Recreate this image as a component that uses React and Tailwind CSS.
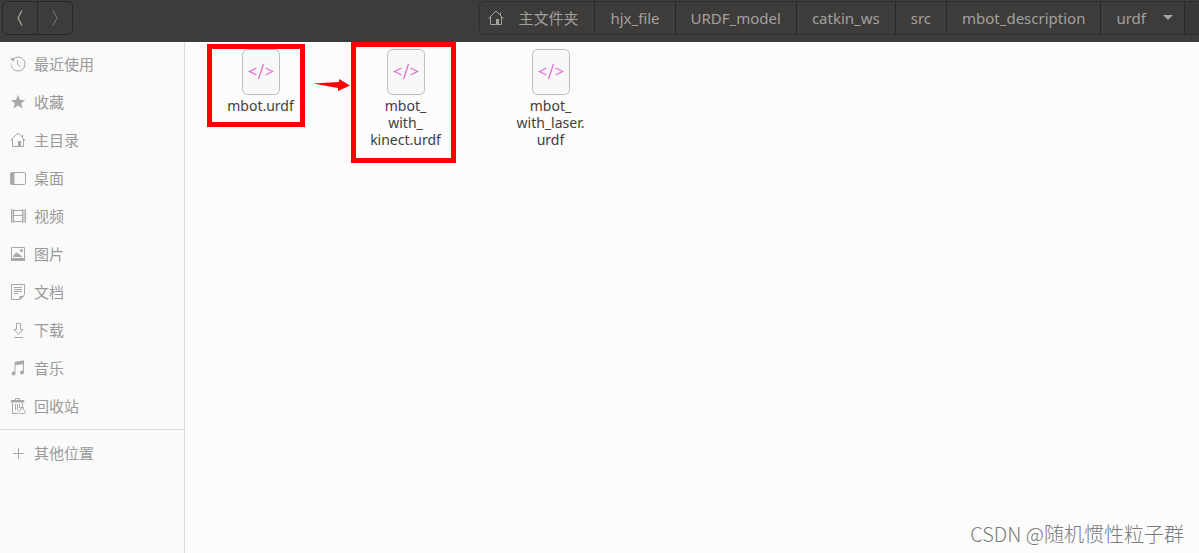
import React from 'react';

const RecentIcon = () => (
    <svg width="16" height="16" viewBox="0 0 16 16" fill="none" stroke="currentColor">
        <path d="M3 3.200A7 7 0 1 1 1.200 9.500" />
        <path d="M1 7.500v1M7.500 4v4.500l2.500 2" />
        <path d="M0 2.500l4.500-.5L3.800 6z" fill="currentColor" stroke="none" />
    </svg>
);

const StarIcon = () => (
    <svg width="16" height="16" viewBox="0 0 16 16" fill="currentColor">
        <path d="M8 .8l2 5.100 5.200.2-4.100 3.300 1.500 5.200L8 11.600l-4.600 3 1.500-5.200L.8 6.100 6 5.900z" />
    </svg>
);

const HomeIcon = () => (
    <svg width="16" height="16" viewBox="0 0 16 16" fill="none" stroke="currentColor">
        <path d="M.5 8.500L8 1l7.500 7.500M2.500 7v7.500h11V7M12.500 5V2.500" />
        <path d="M8 9h3v5.500H8z" fill="currentColor" stroke="none" />
    </svg>
);

const DesktopIcon = () => (
    <svg width="16" height="16" viewBox="0 0 16 16" fill="none" stroke="currentColor">
        <rect x=".5" y="2.500" width="15" height="12" rx="1.500" />
        <path d="M1 2.500h3.500v12H1z" fill="currentColor" stroke="none" />
    </svg>
);

const VideoIcon = () => (
    <svg width="16" height="16" viewBox="0 0 16 16" fill="none" stroke="currentColor">
        <path d="M3.500 1.500v13M12.500 1.500v13M3 2.500h10M3 7.500h10M3 13.500h10" />
        <path d="M2 1.500v13M14 1.500v13" strokeWidth="2" strokeDasharray="1 1" />
        <path d="M1.500 1.500v13M15.500 1.500v13" />
    </svg>
);

const PictureIcon = () => (
    <svg width="16" height="16" viewBox="0 0 16 16" fill="none" stroke="currentColor">
        <path d="M1.500 1.500h13v13h-13z" />
        <path d="M1 12h14v3H1zM3 11V9.500L5 8l1-2 2 2 1-.5 1.500 2L12 10v1z" fill="currentColor" stroke="none" />
        <circle cx="11.500" cy="4.500" r="1.500" fill="currentColor" stroke="none" />
    </svg>
);

const DocumentIcon = () => (
    <svg width="16" height="16" viewBox="0 0 16 16" fill="none" stroke="currentColor">
        <path d="M1.500.5h13v10l-4 5h-9zM4 3.500h8M4 5.500h8M4 7.500h8M4 9.500h4" />
        <path d="M9.500 15.500V12h5z" fill="currentColor" stroke="none" />
    </svg>
);

const DownloadIcon = () => (
    <svg width="16" height="16" viewBox="0 0 16 16" fill="none" stroke="currentColor">
        <path d="M6.500 1.500h4v6h2.500L8.500 12.500 4 7.500h2.500zM4 15.500h9" />
    </svg>
);

const MusicIcon = () => (
    <svg width="16" height="16" viewBox="0 0 16 16" fill="none" stroke="currentColor">
        <path d="M5 13V2.500L13.500 1v11" />
        <path d="M5 2l9-1.500V4L5 5.200z" fill="currentColor" stroke="none" />
        <circle cx="3.500" cy="13.500" r="2" fill="currentColor" stroke="none" />
        <circle cx="12" cy="12.500" r="2" fill="currentColor" stroke="none" />
    </svg>
);

const TrashIcon = () => (
    <svg width="16" height="16" viewBox="0 0 16 16" fill="none" stroke="currentColor">
        <path d="M5.500 2V.5h4V2M2.500 5v10.500H8M12.500 5v4M5.500 6v6M7.500 6v6M9.500 6v4" />
        <path d="M1 2h13l.5 2.500H.5z" fill="currentColor" stroke="none" />
        <path d="M10.500 9.500h3l-.8 1.700c1.400.6 2.400 1.500 2.400 2.600 0 1.200-.8 1.700-1.800 1.700h-2.600c-1 0-1.800-.5-1.800-1.700 0-1.100 1-2 2.400-2.600z" />
    </svg>
);

const PlusIcon = () => (
    <svg width="16" height="16" viewBox="0 0 16 16" fill="none" stroke="currentColor">
        <path d="M8.500 3v11M3 8.500h11" />
    </svg>
);

const places = [
    { label: '最近使用', Icon: RecentIcon },
    { label: '收藏', Icon: StarIcon },
    { label: '主目录', Icon: HomeIcon },
    { label: '桌面', Icon: DesktopIcon },
    { label: '视频', Icon: VideoIcon },
    { label: '图片', Icon: PictureIcon },
    { label: '文档', Icon: DocumentIcon },
    { label: '下载', Icon: DownloadIcon },
    { label: '音乐', Icon: MusicIcon },
    { label: '回收站', Icon: TrashIcon }
];

const crumbs = ['hjx_file', 'URDF_model', 'catkin_ws', 'src', 'mbot_description'];

const files = [
    { lines: ['mbot.urdf'], mark: 'left-[19px] top-[2px] w-[98px] h-[83px]' },
    { lines: ['mbot_', 'with_', 'kinect.urdf'], mark: 'left-[18px] top-0 w-[105px] h-[121px]' },
    { lines: ['mbot_', 'with_laser.', 'urdf'] }
];

function PlaceButton({ label, Icon }) {
    return (
        <button className="flex h-[38px] w-full items-center gap-2 pl-[10px] text-[15px] text-[#999999]">
            <span className="text-[#a8a8a8]"><Icon /></span>
            {label}
        </button>
    );
}

function FileItem({ lines, mark }) {
    return (
        <li className="relative w-[145px] pt-[7px]">
            <button className="flex w-full flex-col items-center text-[14px] leading-[17px] text-[#404040]">
                <svg className="mb-px" width="38" height="47" viewBox="0 0 38 47" fill="none">
                    <rect x=".5" y=".5" width="37" height="45" rx="5" fill="#f8f8f8" stroke="#bdbdbd" />
                    <path d="M14.500 19L7.500 22.500l7 3.500M23.500 19l7 3.500-7 3.500M21.500 15l-5 15" stroke="#e06fd5" strokeWidth="1.300" />
                </svg>
                {lines.map((line) => (
                    <span key={line}>{line}</span>
                ))}
            </button>
            {mark && <div className={`pointer-events-none absolute border-[5px] border-[#fe0000] ${mark}`} />}
        </li>
    );
}

export default function App() {
    return (
        <div className="relative flex min-h-screen flex-col bg-[#fcfcfc] font-['Noto_Sans','Noto_Sans_CJK_SC',sans-serif]">
            <header className="flex h-[42px] items-start justify-between bg-[#3e3c3a] pl-[2px] pt-px text-[15px] text-[#a3a19e]">
                <div className="flex h-[34px] rounded-[5px] border border-[#282726]">
                    <button aria-label="后退" className="flex w-[35px] items-center justify-center border-r border-[#282726]">
                        <svg width="8" height="16" viewBox="0 0 8 16" fill="none" stroke="currentColor" strokeWidth="1.300">
                            <path d="M6 .5L2 8l4 7.500" />
                        </svg>
                    </button>
                    <button aria-label="前进" className="flex w-[34px] items-center justify-center text-[#6a6866]">
                        <svg width="8" height="16" viewBox="0 0 8 16" fill="none" stroke="currentColor" strokeWidth="1.300">
                            <path d="M2 .5L6 8l-4 7.500" />
                        </svg>
                    </button>
                </div>

                <nav className="flex h-[34px] rounded-l-[5px] border border-r-0 border-[#302f2d]">
                    <button className="flex items-center gap-[14px] border-r border-[#282726] pl-2 pr-4">
                        <HomeIcon />
                        主文件夹
                    </button>
                    {crumbs.map((crumb) => (
                        <button key={crumb} className="border-r border-[#282726] px-[15px]">{crumb}</button>
                    ))}
                    <button className="flex items-center gap-4 border-r border-[#282726] pl-[15px] pr-[10px]">
                        urdf
                        <svg width="12" height="6" viewBox="0 0 12 6" fill="currentColor">
                            <path d="M1 0h10L6 5z" />
                        </svg>
                    </button>
                    <div className="w-[14px] bg-[#3a3836]" />
                </nav>
            </header>

            <div className="flex flex-1">
                <aside className="w-[185px] shrink-0 border-r border-[#dcdcdc] bg-[#fafafa] pt-[3px]">
                    {places.map((place) => (
                        <PlaceButton key={place.label} {...place} />
                    ))}
                    <div className="my-1 border-t border-[#dcdcdc]" />
                    <PlaceButton label="其他位置" Icon={PlusIcon} />
                </aside>

                <main className="relative flex-1 pl-[3px]">
                    <ul className="flex flex-wrap">
                        {files.map((file) => (
                            <FileItem key={file.lines.join('')} {...file} />
                        ))}
                    </ul>
                    <svg className="absolute left-[128px] top-[36px]" width="37" height="14" viewBox="0 0 37 14">
                        <path d="M0 5.500L26 4V1l11 6.500L25 13v-3z" fill="#fe0000" />
                    </svg>
                </main>
            </div>

            <p className="absolute bottom-1 right-[15px] font-['Noto_Sans_CJK_SC',sans-serif] text-[20px] font-light leading-[30px] text-[#7a7a7a] [text-shadow:1px_1px_0_#fff]">
                CSDN @随机惯性粒子群
            </p>
        </div>
    );
}
